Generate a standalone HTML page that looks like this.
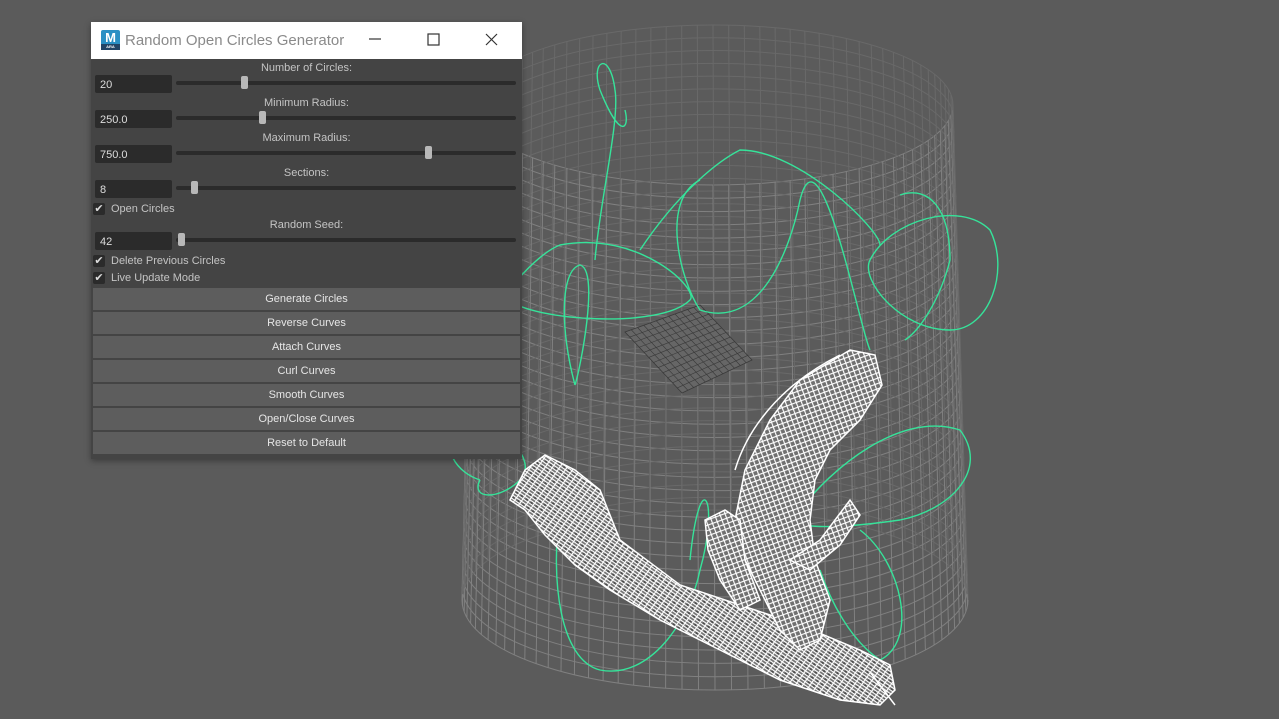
<!DOCTYPE html>
<html><head><meta charset="utf-8"><style>
*{margin:0;padding:0;box-sizing:border-box}
body{width:1279px;height:719px;background:#5b5b5b;overflow:hidden;position:relative;font-family:"Liberation Sans","DejaVu Sans",sans-serif}
svg#vp{position:absolute;left:0;top:0}
#win{position:absolute;left:91px;top:22px;width:431px;height:437px;background:#444;box-shadow:0 2px 6px rgba(0,0,0,.35)}
#title{height:37px;background:#fff;position:relative;color:#8a8a8a;font-size:15px}
#title .t{position:absolute;left:34px;top:10px}
#logo{position:absolute;left:10px;top:8px;width:19px;height:20px;background:#2a8fc4;border-radius:2px;color:#fff;font-weight:bold;font-size:13px;text-align:center;line-height:15px}
#logo i{position:absolute;left:0;bottom:0;width:19px;height:6px;background:#246;font-size:4px;line-height:6px;font-style:normal}
.lbl{position:absolute;left:0;width:431px;text-align:center;color:#c4c4c4;font-size:11px}
.fld{position:absolute;left:4px;width:77px;height:18px;background:#2b2b2b;border-radius:2px;color:#ddd;font-size:11px;padding:4px 0 0 5px}
.trk{position:absolute;left:85px;width:340px;height:4px;background:#2b2b2b;border-radius:2px}
.thm{position:absolute;width:7px;height:13px;background:#b8b8b8;border-radius:2px}
.cb{position:absolute;left:2px;width:12px;height:12px;background:#2b2b2b;border-radius:2px;color:#ddd;font-size:11px;line-height:12px;text-align:center}
.cbl{position:absolute;left:20px;color:#c4c4c4;font-size:11px}
.btn{position:absolute;left:2px;width:427px;height:22px;background:#5d5d5d;color:#e6e6e6;font-size:11px;text-align:center;line-height:22px}
</style></head><body>
<svg id="vp" width="1279" height="719"></svg>
<div id="win">
<div id="title"><div id="logo">M<i>ARA</i></div><span class="t">Random Open Circles Generator</span>
<svg style="position:absolute;left:276px;top:10px" width="140" height="18" stroke="#333" stroke-width="1.2" fill="none"><path d="M2 7H14"/><rect x="61" y="2" width="11" height="11"/><path d="M119 2L130 13M130 2L119 13"/></svg></div>
<div class="lbl" style="top:40px">Number of Circles:</div>
<div class="fld" style="top:53px">20</div><div class="trk" style="top:59px"><div class="thm" style="left:65px;top:-5px"></div></div>
<div class="lbl" style="top:75px">Minimum Radius:</div>
<div class="fld" style="top:88px">250.0</div><div class="trk" style="top:94px"><div class="thm" style="left:83px;top:-5px"></div></div>
<div class="lbl" style="top:110px">Maximum Radius:</div>
<div class="fld" style="top:123px">750.0</div><div class="trk" style="top:129px"><div class="thm" style="left:249px;top:-5px"></div></div>
<div class="lbl" style="top:145px">Sections:</div>
<div class="fld" style="top:158px">8</div><div class="trk" style="top:164px"><div class="thm" style="left:15px;top:-5px"></div></div>
<div class="cb" style="top:181px">✔</div><div class="cbl" style="top:181px">Open Circles</div>
<div class="lbl" style="top:197px">Random Seed:</div>
<div class="fld" style="top:210px">42</div><div class="trk" style="top:216px"><div class="thm" style="left:2px;top:-5px"></div></div>
<div class="cb" style="top:233px">✔</div><div class="cbl" style="top:233px">Delete Previous Circles</div>
<div class="cb" style="top:250px">✔</div><div class="cbl" style="top:250px">Live Update Mode</div>
<div class="btn" style="top:266px">Generate Circles</div>
<div class="btn" style="top:290px">Reverse Curves</div>
<div class="btn" style="top:314px">Attach Curves</div>
<div class="btn" style="top:338px">Curl Curves</div>
<div class="btn" style="top:362px">Smooth Curves</div>
<div class="btn" style="top:386px">Open/Close Curves</div>
<div class="btn" style="top:410px">Reset to Default</div>
</div>
<script>
var s=document.getElementById('vp'),h='';
h+='<defs><pattern id="m" width="6" height="6" patternUnits="userSpaceOnUse" patternTransform="rotate(35)"><rect width="6" height="6" fill="#707070"/><path d="M0 0.5H6M0.5 0V6M0 3.5H6" stroke="#fff" stroke-width="1.2"/><rect x="3" y="4" width="2" height="2" fill="#222" opacity=".5"/></pattern>'+
'<pattern id="m2" width="5" height="5" patternUnits="userSpaceOnUse" patternTransform="rotate(-20)"><rect width="5" height="5" fill="#707070"/><path d="M0 0.5H5M0.5 0V5" stroke="#fff" stroke-width="1.3"/></pattern></defs>';
function L(t){return{cx:713+2*t,rx:240+13*t,cy:105+495*t,ry:80+10*t}}
var g='';
for(var i=0;i<=38;i++){var t=i/38,e=L(t);
g+='<path d="M'+(e.cx-e.rx)+' '+e.cy+' A'+e.rx+' '+e.ry+' 0 0 0 '+(e.cx+e.rx)+' '+e.cy+'" stroke="#808080"/>';
g+='<path d="M'+(e.cx-e.rx)+' '+e.cy+' A'+e.rx+' '+e.ry+' 0 0 1 '+(e.cx+e.rx)+' '+e.cy+'" stroke="#696969"/>';}
for(var k=0;k<96;k++){var a=k/96*2*Math.PI,d='',c=Math.cos(a),sn=Math.sin(a);
for(var j=0;j<=20;j++){var e=L(j/20);d+=(j?'L':'M')+(e.cx+e.rx*c).toFixed(1)+' '+(e.cy+e.ry*sn).toFixed(1)}
g+='<path d="'+d+'" stroke="'+(sn>0?'#808080':'#696969')+'"/>';}
h+='<g fill="none" stroke-width="1">'+g+'</g>';
h+='<g stroke="#3a3a3a" fill="#666" stroke-width=".8"><path d="M625 332L700 305L752 360L682 393Z"/></g>';
var gr='';for(var i=1;i<12;i++){var t=i/12;gr+='<path d="M'+(625+75*t)+' '+(332-27*t)+'L'+(682+70*t)+' '+(393-33*t)+'M'+(625+57*t)+' '+(332+61*t)+'L'+(700+52*t)+' '+(305+55*t)+'"/>'}
h+='<g stroke="#3a3a3a" stroke-width=".6">'+gr+'</g>';
h+='<g fill="none" stroke="#36e39a" stroke-width="1.4">'+
'<path d="M455 440C430 380 520 260 560 245C640 230 700 290 690 300C660 330 530 320 510 300"/>'+
'<path d="M595 260C600 200 620 120 615 90C610 50 590 60 600 90C620 140 630 130 625 110"/>'+
'<path d="M575 385C560 330 560 270 580 265C600 270 580 370 575 385"/>'+
'<path d="M640 250C680 190 720 160 740 150C800 150 880 230 880 245"/>'+
'<path d="M870 260C890 220 960 200 990 230C1010 270 990 330 950 330C900 330 860 280 870 260"/>'+
'<path d="M700 180C660 200 680 280 700 310C760 330 790 250 800 200C820 120 860 330 870 350"/>'+
'<path d="M560 510C550 580 560 660 600 670C650 680 690 620 700 570C720 500 700 460 690 560"/>'+
'<path d="M800 510C830 470 900 410 960 430C990 470 950 510 900 520C830 530 780 530 790 510"/>'+
'<path d="M900 195C930 185 950 210 950 260C940 300 920 330 905 340"/>'+
'<path d="M480 480C450 470 440 440 460 420C500 420 540 460 520 480C500 500 470 500 480 480"/>'+
'<path d="M860 530C900 560 920 640 880 660C850 640 830 600 820 570"/>'+
'<path d="M700 610C720 620 750 640 770 630"/></g>';
h+='<g stroke="#fff" stroke-width="1.5">'+
'<path fill="url(#m)" d="M510 500L525 470L545 455L575 470L600 490L620 540L680 585L740 605L800 625L860 650L890 665L895 690L880 705L840 700L780 680L720 650L660 620L610 590L575 565L545 535L525 510Z"/>'+
'<path fill="url(#m2)" d="M850 350L875 355L882 385L860 420L830 450L815 480L810 520L815 560L830 600L820 640L800 650L780 630L765 600L745 560L735 520L745 470L770 420L800 380Z"/>'+
'<path fill="url(#m2)" d="M705 520L725 510L740 520L745 560L760 600L740 610L720 580L708 550Z"/>'+
'<path fill="url(#m2)" d="M790 560L820 540L850 500L860 515L840 545L810 570Z"/>'+
'<path fill="none" d="M870 672L895 705M735 470C750 420 790 380 840 355"/>'+
'</g>';
s.innerHTML=h;
</script>
</body></html>
